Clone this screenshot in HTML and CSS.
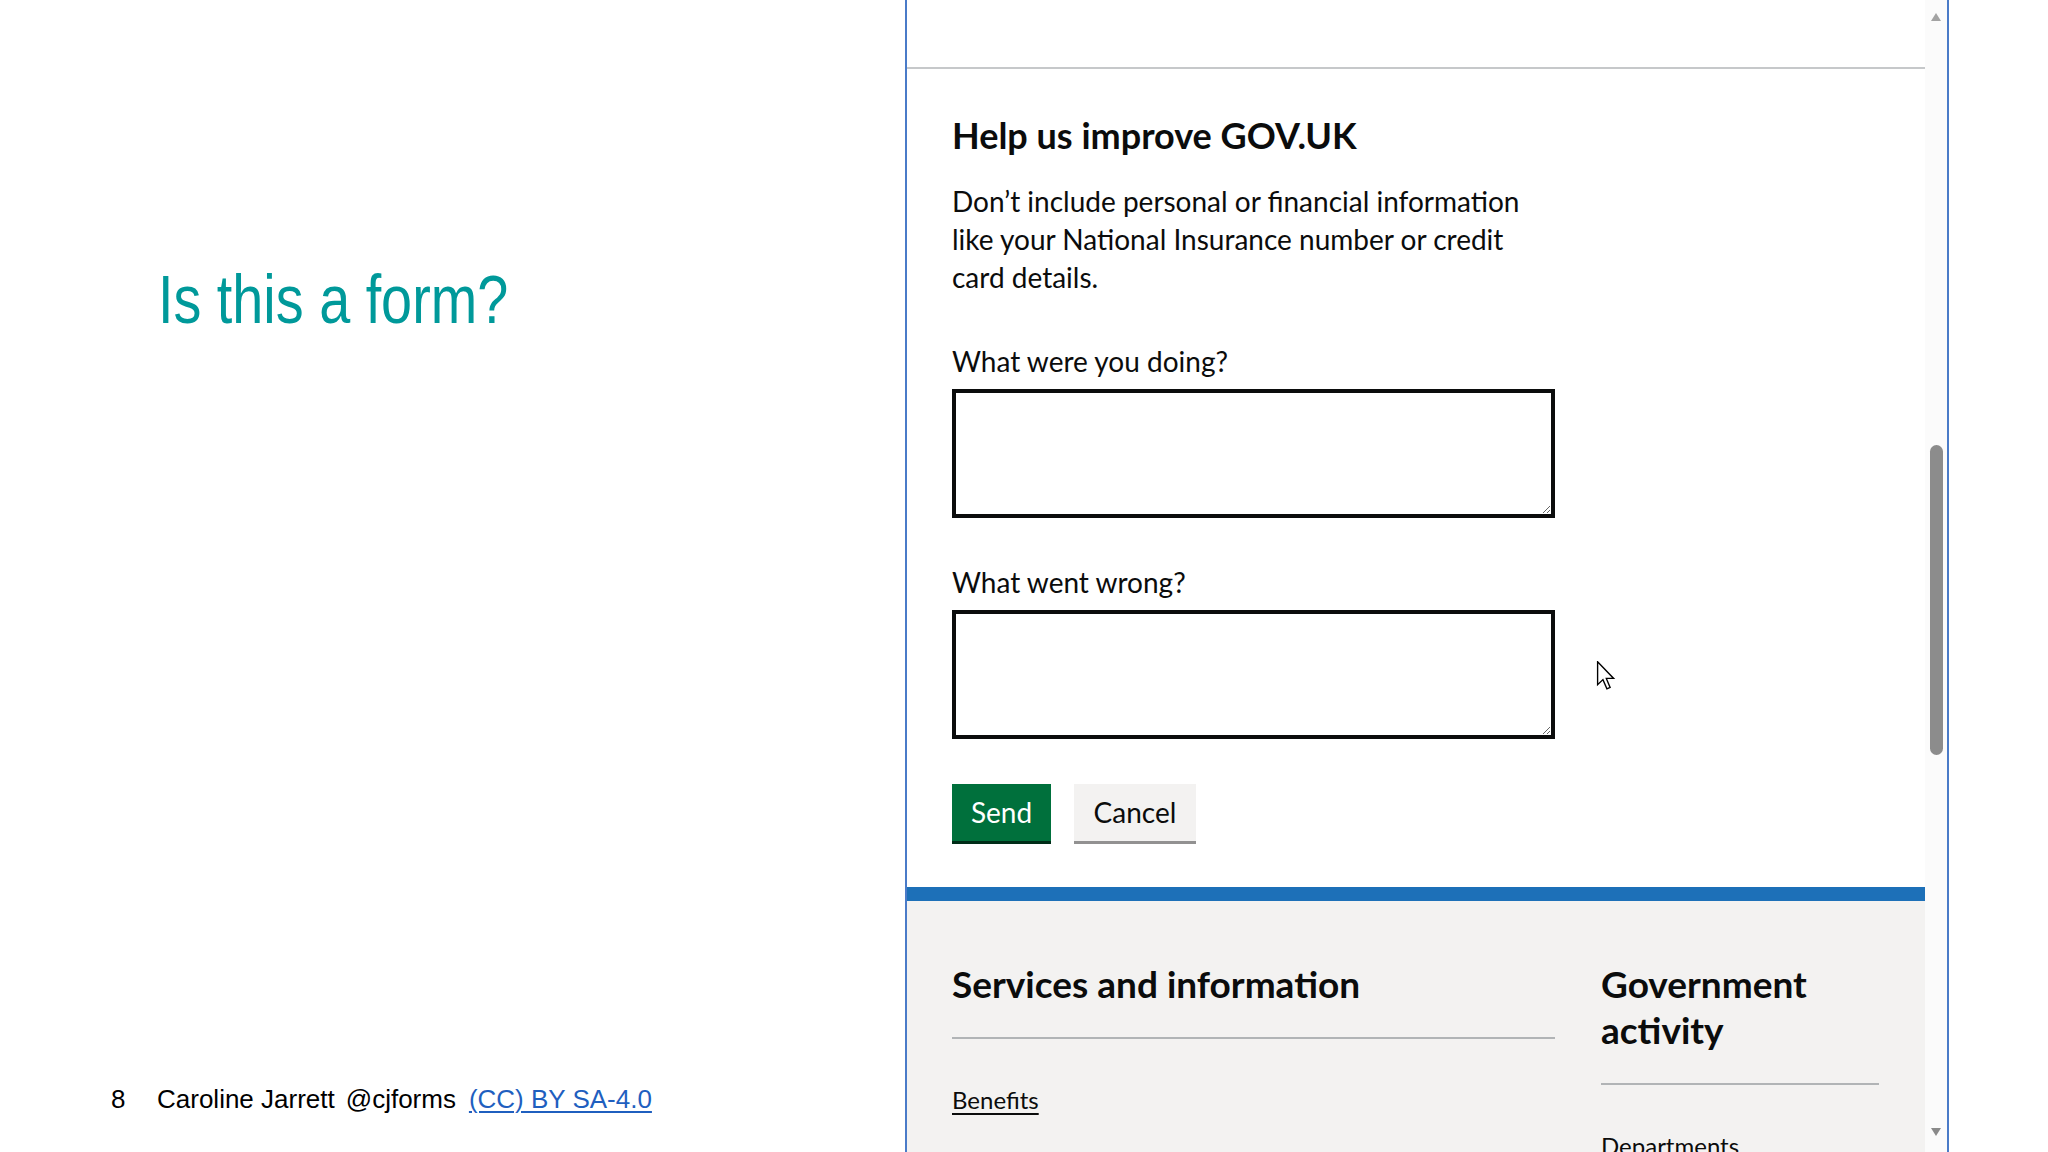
FILE: index.html
```html
<!DOCTYPE html>
<html lang="en">
<head>
<meta charset="utf-8">
<title>Is this a form?</title>
<link rel="stylesheet" href="styles.css">
</head>
<body>
<div class="slide">
  <div class="left">
    <h1 class="title">Is this a form?</h1>
    <div class="credit">
      <span class="num">8</span>
      <span class="author">Caroline Jarrett</span>
      <span class="handle">@cjforms</span>
      <a class="lic" href="#">(CC) BY SA-4.0</a>
    </div>
  </div>
  <div class="frame">
    <div class="page">
      <div class="topbar"></div>
      <div class="feedback">
        <h2 class="fb-title">Help us improve GOV.UK</h2>
        <p class="fb-text">Don’t include personal or financial information like your National Insurance number or credit card details.</p>
        <label class="fb-label" for="doing">What were you doing?</label>
        <textarea class="fb-input" id="doing"></textarea>
        <label class="fb-label second" for="wrong">What went wrong?</label>
        <textarea class="fb-input" id="wrong"></textarea>
        <div class="actions">
          <button class="btn btn-send" type="button">Send</button>
          <button class="btn btn-cancel" type="button">Cancel</button>
        </div>
      </div>
      <footer class="foot">
        <div class="foot-col foot-wide">
          <h3 class="foot-title">Services and information</h3>
          <hr class="foot-rule">
          <a class="foot-link" href="#">Benefits</a>
        </div>
        <div class="foot-col foot-narrow">
          <h3 class="foot-title">Government activity</h3>
          <hr class="foot-rule">
          <a class="foot-link plain" href="#">Departments</a>
        </div>
      </footer>
    </div>
    <div class="scrollbar">
      <span class="arrow up"></span>
      <span class="thumb"></span>
      <span class="arrow down"></span>
    </div>
    <svg class="cursor" width="20" height="29" viewBox="0 0 12 19">
      <path d="M0.5 0.5 L0.5 15.5 L4 12.2 L6.6 18.2 L8.7 17.3 L6.2 11.4 L11 11.4 Z" fill="#fff" stroke="#000" stroke-width="0.9" stroke-linejoin="miter"/>
    </svg>
  </div>
</div>
</body>
</html>
```
FILE: styles.css
```css
html, body {
  margin: 0;
  padding: 0;
}
body {
  width: 2048px;
  height: 1152px;
  overflow: hidden;
  background: #ffffff;
}
.slide {
  display: flex;
  height: 1152px;
}
.left {
  width: 905px;
  flex: none;
  box-sizing: border-box;
  padding-left: 158px;
  display: flex;
  flex-direction: column;
}
.title {
  margin: 259px 0 0;
  font-family: "Liberation Sans", Arial, sans-serif;
  font-weight: 400;
  font-size: 68px;
  line-height: 80px;
  color: #00999a;
  transform: scaleX(0.82);
  transform-origin: 0 0;
  white-space: nowrap;
}
.credit {
  margin-top: auto;
  margin-bottom: 38px;
  margin-left: -47px;
  display: flex;
  font-family: "Liberation Sans", Arial, sans-serif;
  font-size: 26px;
  line-height: 30px;
  color: #000;
}
.num { width: 46px; }
.author { margin-right: 11px; }
.handle { margin-right: 13px; }
.lic {
  color: #1f5fbf;
  text-decoration: underline;
  text-decoration-thickness: 2px;
  text-underline-offset: 3px;
}
.frame {
  width: 1044px;
  flex: none;
  box-sizing: border-box;
  height: 1152px;
  border-left: 2px solid #4a7bc8;
  border-right: 2px solid #4a7bc8;
  display: flex;
  position: relative;
  overflow: hidden;
  font-family: Lato, "Noto Sans", sans-serif;
  color: #0b0c0c;
}
.page {
  width: 1018px;
  flex: none;
  background: #fff;
}
.topbar {
  height: 67px;
  border-bottom: 2px solid #c6c8ca;
}
.feedback {
  padding: 44px 0 46px 45px;
}
.fb-title {
  margin: 0;
  font-weight: 700;
  font-size: 36px;
  line-height: 44px;
}
.fb-text {
  margin: 25px 0 0;
  width: 603px;
  font-size: 28px;
  line-height: 38px;
}
.fb-label {
  display: block;
  margin-top: 46px;
  font-size: 28px;
  line-height: 38px;
}
.fb-label.second {
  margin-top: 45px;
}
.fb-input {
  display: block;
  margin: 9px 0 0;
  width: 603px;
  height: 129px;
  box-sizing: border-box;
  border: 4px solid #0b0c0c;
  border-radius: 0;
  background: #fff;
  resize: vertical;
  font-family: inherit;
  font-size: 28px;
}
.actions {
  margin-top: 45px;
  display: flex;
  gap: 23px;
}
.btn {
  height: 57px;
  border: none;
  border-radius: 0;
  padding: 0;
  font-family: Lato, "Noto Sans", sans-serif;
  font-size: 28px;
  line-height: 57px;
}
.btn-send {
  width: 99px;
  background: #00703c;
  color: #fff;
  box-shadow: 0 3px 0 #002d18;
}
.btn-cancel {
  width: 122px;
  background: #f3f2f1;
  color: #0b0c0c;
  box-shadow: 0 3px 0 #929191;
}
.foot {
  border-top: 14px solid #1d70b8;
  background: #f3f2f1;
  padding: 60px 0 200px 45px;
  display: flex;
  gap: 46px;
}
.foot-col { flex: none; }
.foot-wide { width: 603px; }
.foot-narrow { width: 278px; }
.foot-title {
  margin: 0;
  font-weight: 700;
  font-size: 37px;
  line-height: 46px;
}
.foot-rule {
  margin: 30px 0 0;
  border: none;
  border-top: 2px solid #b1b4b6;
  height: 0;
}
.foot-link {
  display: block;
  margin-top: 42px;
  font-size: 24px;
  line-height: 38px;
  color: #0b0c0c;
  text-decoration: underline;
  text-decoration-thickness: 2px;
  text-underline-offset: 4px;
}
.foot-link.plain { text-decoration: none; }
.scrollbar {
  width: 22px;
  flex: none;
  background: #fbfbfb;
  display: flex;
  flex-direction: column;
  align-items: center;
}
.arrow {
  width: 0;
  height: 0;
  border-left: 5px solid transparent;
  border-right: 5px solid transparent;
}
.arrow.up {
  margin-top: 13px;
  border-bottom: 8px solid #a3a3a3;
}
.arrow.down {
  margin-top: 373px;
  border-top: 8px solid #8a8a8a;
}
.thumb {
  margin-top: 424px;
  width: 13px;
  height: 310px;
  border-radius: 7px;
  background: #8c8c8c;
}
.cursor {
  position: absolute;
  left: 689px;
  top: 661px;
}
```
